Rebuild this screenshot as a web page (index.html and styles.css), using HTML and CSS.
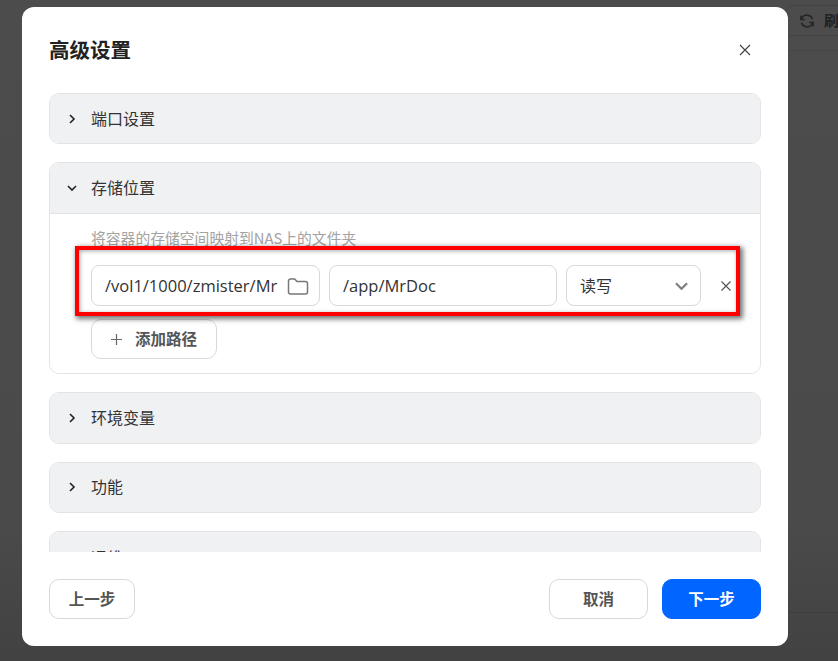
FILE: index.html
```html
<!DOCTYPE html>
<html lang="zh">
<head>
<meta charset="utf-8">
<title>高级设置</title>
<link rel="stylesheet" href="styles.css">
</head>
<body>
<div class="backdrop">
  <div class="bg-toolbar">
    <svg class="bg-refresh" viewBox="0 0 16 16" width="16" height="16" fill="none" stroke="#222" stroke-width="1.5"><path d="M13.5 6A6 6 0 0 0 3 4.6L2 6.5M2.5 10A6 6 0 0 0 13 11.4l1-1.9"/><path d="M2 2.8v3.7h3.6M14 13.2V9.5h-3.6"/></svg>
    <span class="bg-text">刷</span>
  </div>
  <div class="bg-line-a"></div>
  <div class="bg-line-b"></div>
</div>
<div class="modal">
  <header class="modal-head">
    <h1>高级设置</h1>
    <svg class="close" viewBox="0 0 12 12" width="12" height="12" fill="none" stroke="#444" stroke-width="1.2"><path d="M1 1l10 10M11 1L1 11"/></svg>
  </header>
  <div class="scroll">
    <section class="panel">
      <div class="panel-head">
        <svg class="chev" viewBox="0 0 10 10" width="10" height="10" fill="none" stroke="#222" stroke-width="1.6"><path d="M3 1l4 4-4 4"/></svg>
        <span class="label">端口设置</span>
      </div>
    </section>
    <section class="panel">
      <div class="panel-head open">
        <svg class="chev" viewBox="0 0 10 10" width="10" height="10" fill="none" stroke="#222" stroke-width="1.6"><path d="M1 3l4 4 4-4"/></svg>
        <span class="label">存储位置</span>
      </div>
      <div class="panel-body">
        <p class="hint">将容器的存储空间映射到NAS上的文件夹</p>
        <div class="row">
          <div class="field f-src">
            <span class="val">/vol1/1000/zmister/Mr</span>
            <svg viewBox="0 0 22 18" width="22" height="18" fill="none" stroke="#777" stroke-width="1.5"><path d="M1.5 4a2 2 0 0 1 2-2h4.2l2.3 2.5h8.5a2 2 0 0 1 2 2V15a2 2 0 0 1-2 2h-15a2 2 0 0 1-2-2z"/></svg>
          </div>
          <div class="field f-dst"><span class="val">/app/MrDoc</span></div>
          <div class="field f-sel">
            <span class="val cjk">读写</span>
            <svg viewBox="0 0 14 8" width="13" height="8" fill="none" stroke="#808080" stroke-width="2.4"><path d="M1 1l6 6 6-6"/></svg>
          </div>
          <svg class="row-x" viewBox="0 0 10 10" width="10" height="10" fill="none" stroke="#555" stroke-width="1.2"><path d="M.5.5l9 9M9.5.5l-9 9"/></svg>
        </div>
        <button class="btn add">
          <svg viewBox="0 0 11 11" width="11" height="11" fill="none" stroke="#666" stroke-width="1.2"><path d="M5.5 0v11M0 5.5h11"/></svg>
          <span class="label">添加路径</span>
        </button>
      </div>
    </section>
    <section class="panel">
      <div class="panel-head tall">
        <svg class="chev" viewBox="0 0 10 10" width="10" height="10" fill="none" stroke="#222" stroke-width="1.6"><path d="M3 1l4 4-4 4"/></svg>
        <span class="label">环境变量</span>
      </div>
    </section>
    <section class="panel">
      <div class="panel-head">
        <svg class="chev" viewBox="0 0 10 10" width="10" height="10" fill="none" stroke="#222" stroke-width="1.6"><path d="M3 1l4 4-4 4"/></svg>
        <span class="label">功能</span>
      </div>
    </section>
    <section class="panel">
      <div class="panel-head peek">
        <svg class="chev" viewBox="0 0 10 10" width="10" height="10" fill="none" stroke="#222" stroke-width="1.6"><path d="M3 1l4 4-4 4"/></svg>
        <span class="label">运维</span>
      </div>
    </section>
  </div>
  <footer class="modal-foot">
    <button class="btn prev"><span class="label">上一步</span></button>
    <div class="foot-right">
      <button class="btn cancel"><span class="label">取消</span></button>
      <button class="btn next"><span class="label">下一步</span></button>
    </div>
  </footer>
  <div class="highlight"></div>
</div>
</body>
</html>
```
FILE: styles.css
```css
* { box-sizing: border-box; }
html, body { margin: 0; height: 100%; }
body {
  width: 838px;
  height: 661px;
  overflow: hidden;
  background: #484848;
  position: relative;
  font-family: "Noto Sans CJK SC", "Open Sans", sans-serif;
  color: #222;
}
.backdrop { position: absolute; inset: 0; background: linear-gradient(#4c4c4c, #4a4a4a 80%, #424242); }
.bg-toolbar {
  position: absolute; left: 785px; top: 5px; width: 80px; height: 31px;
  border: 1px solid #444; border-radius: 8px 0 0 0;
  display: flex; align-items: center; gap: 9px; padding-left: 13px;
}
.bg-text { font-size: 15px; font-weight: 700; color: #222; line-height: 22px; position: relative; top: -1px; }
.bg-line-a { position: absolute; left: 788px; right: 0; top: 50px; height: 1px; background: #454545; }
.bg-line-b { position: absolute; left: 788px; right: 0; top: 612px; height: 1px; background: #3e3e3e; }
.modal {
  position: absolute; left: 22px; top: 7px; width: 766px; height: 639px;
  background: #fff; border-radius: 12px;
  display: flex; flex-direction: column;
}
.modal-head {
  height: 86px; padding: 0 37px 0 27px;
  display: flex; align-items: center; justify-content: space-between;
  flex: none;
}
.modal-head h1 { margin: 0; font-size: 20.5px; font-weight: 700; color: #222; line-height: 30px; position: relative; top: -1px; }
.scroll { height: 459px; flex: none; overflow: hidden; padding: 0 27px; display: flex; flex-direction: column; gap: 18px; }
.panel { border: 1px solid #e3e3e5; border-radius: 10px; background: #fff; flex: none; overflow: hidden; }
.panel-head {
  height: 49px; background: #f0f1f3;
  display: flex; align-items: center; gap: 14px; padding-left: 17px;
  font-size: 16px; color: #333;
}
.panel-head.tall { height: 49.5px; }
.panel-head.peek { padding-top: 4px; }
.label { line-height: 22px; position: relative; top: -1px; }
.panel-head.open { height: 51px; border-bottom: 1px solid #e3e3e5; }
.panel-body { padding: 14px 18px 13px 41px; background: #fff; height: 159px; }
.hint { margin: 0; font-size: 14.8px; line-height: 20px; color: #a3a3a3; }
.row { display: flex; align-items: center; margin-top: 17px; height: 41px; }
.field {
  height: 41px; border: 1px solid #d9d9d9; border-radius: 8px;
  display: flex; align-items: center; justify-content: space-between;
  padding-left: 13px; font-size: 16.5px; color: #333; flex: none;
}
.val { font-family: "Open Sans", "Noto Sans CJK SC", sans-serif; white-space: nowrap; }
.val.cjk { font-family: "Noto Sans CJK SC", sans-serif; font-size: 16px; line-height: 22px; position: relative; top: -1px; }
.f-src { width: 229px; padding-right: 10px; margin-right: 9px; }
.f-dst { width: 228px; margin-right: 9px; }
.f-sel { width: 135px; padding-right: 12px; margin-right: 20px; }
.btn {
  height: 40px; border: 1px solid #d9d9d9; border-radius: 10px; background: #fff;
  font-family: inherit; font-size: 15.5px; font-weight: 700; color: #555; padding: 0;
}
.add { margin-top: 13px; width: 126px; display: flex; align-items: center; justify-content: center; gap: 13px; }
.modal-foot {
  flex: 1; padding: 27px 27px 0;
  display: flex; align-items: flex-start; justify-content: space-between;
}
.prev { width: 86px; }
.foot-right { display: flex; gap: 14px; }
.cancel { width: 99px; }
.next { width: 99px; background: #0066ff; border-color: #0066ff; color: #fff; }
.highlight {
  position: absolute; left: 53px; top: 239px; width: 665px; height: 70px;
  border: 4px solid #f00; box-shadow: 2px 2px 5px 1px rgba(0,0,0,.55), inset 1px 1px 4px rgba(0,0,0,.35);
}
```
